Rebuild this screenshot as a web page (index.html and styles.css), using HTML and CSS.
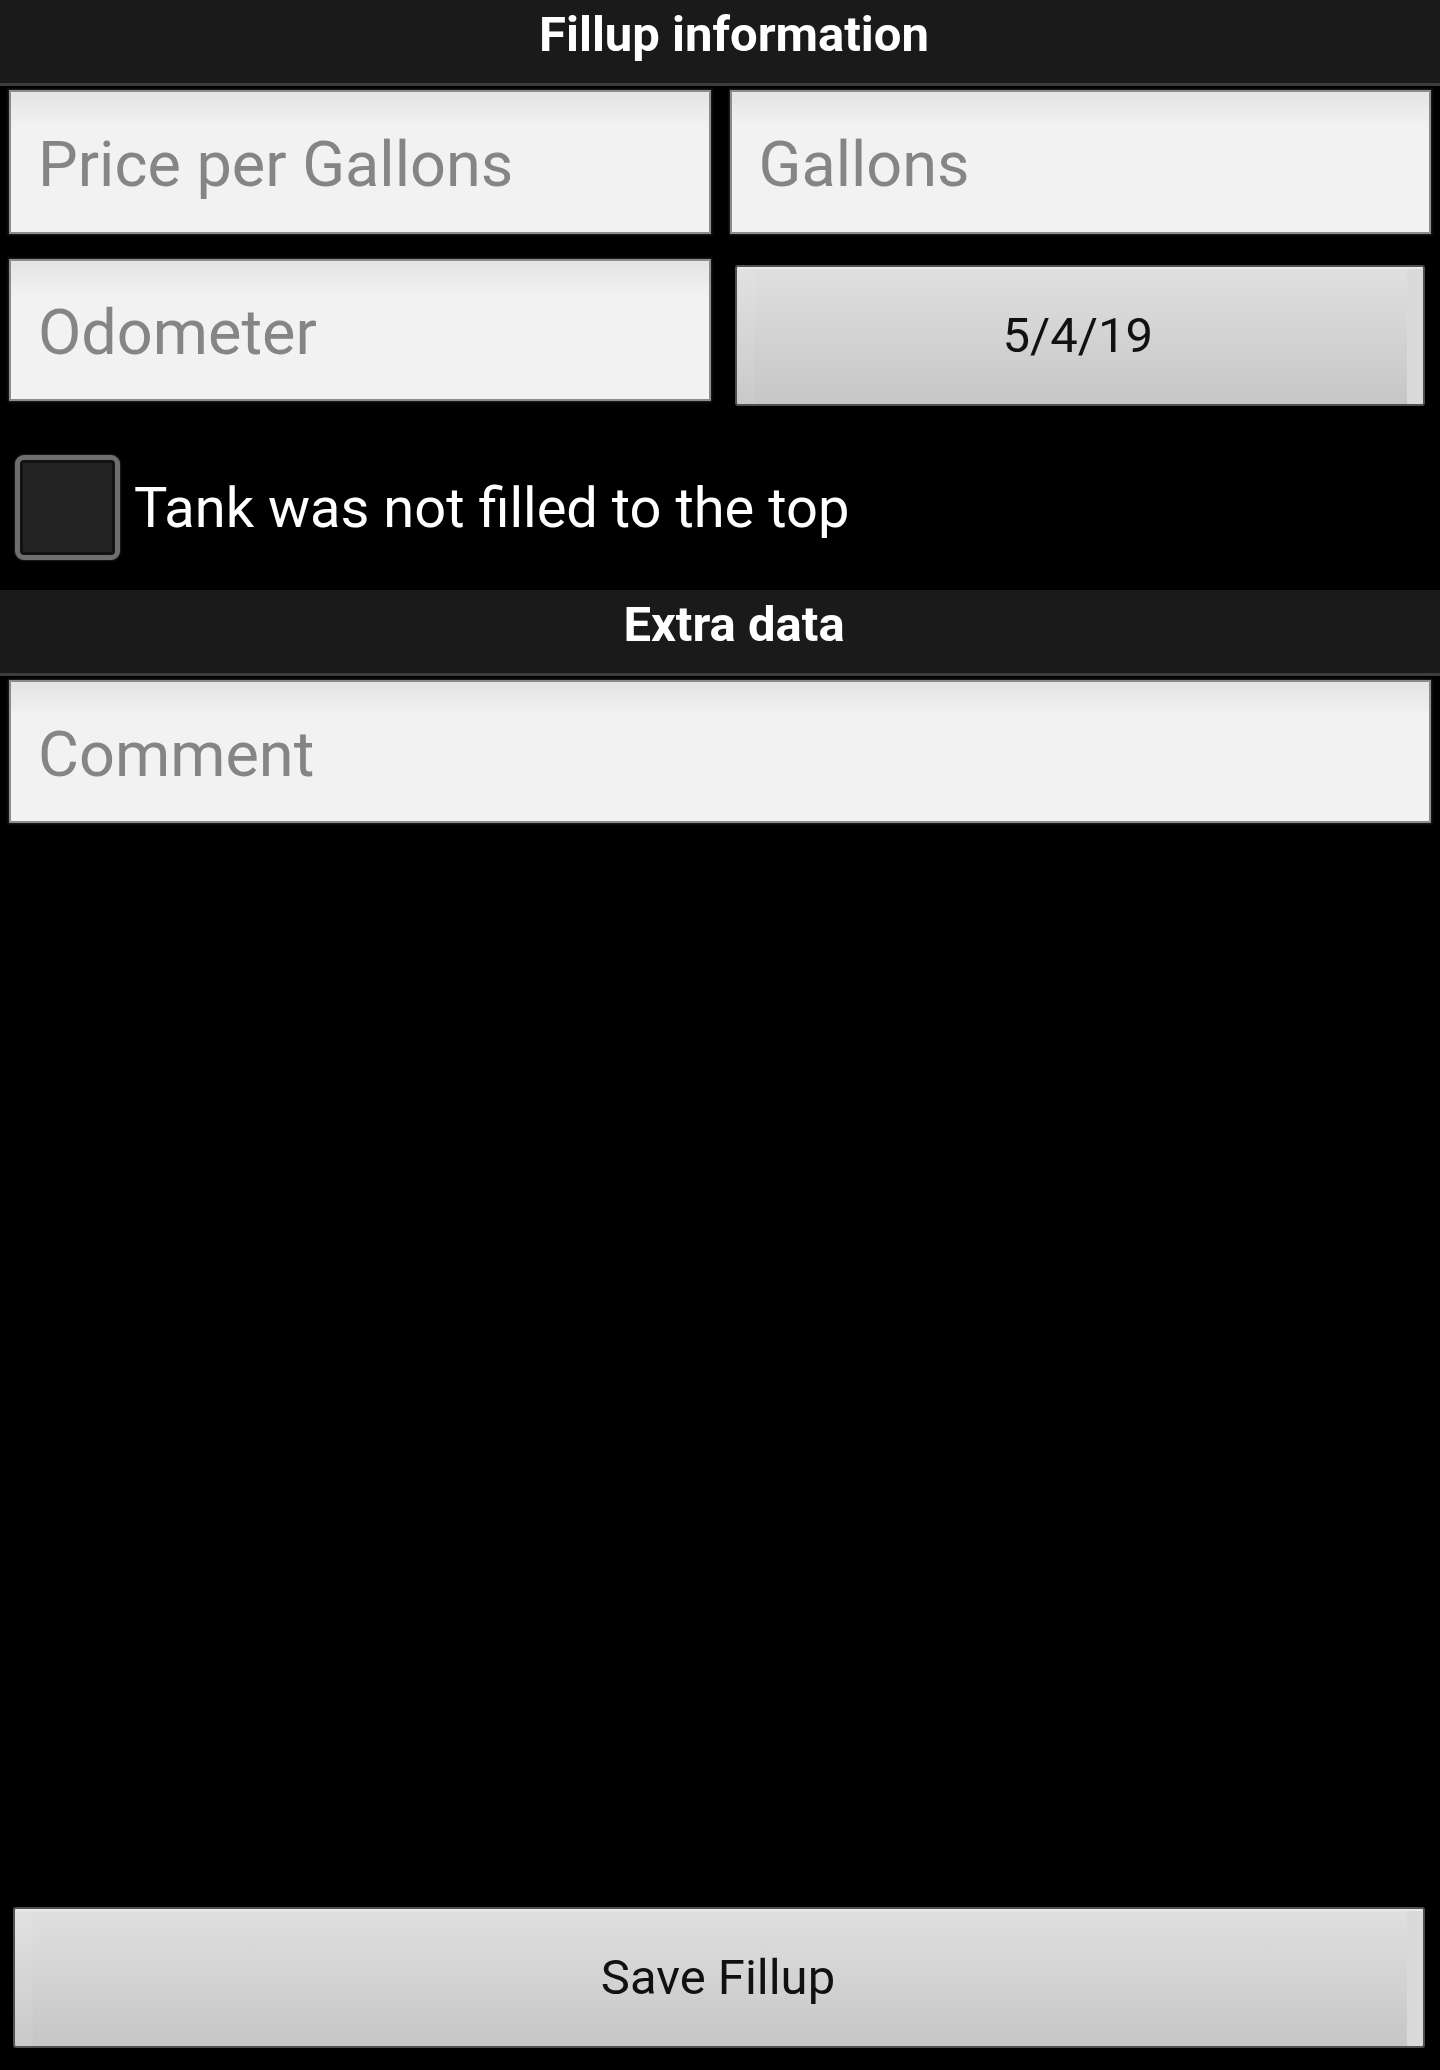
FILE: index.html
```html
<!DOCTYPE html>
<html lang="en">
<head>
<meta charset="utf-8">
<title>Fillup</title>
<link rel="stylesheet" href="styles.css">
</head>
<body>
<div class="screen">
  <div class="section-title">Fillup information</div>
  <div class="field-grid">
    <input class="field" type="text" placeholder="Price per Gallons">
    <input class="field" type="text" placeholder="Gallons">
    <input class="field field-short" type="text" placeholder="Odometer">
    <button class="btn btn-date" type="button">5/4/19</button>
  </div>
  <label class="check-row">
    <span class="checkbox"></span>
    <span class="check-label">Tank was not filled to the top</span>
  </label>
  <div class="section-title">Extra data</div>
  <div class="comment-wrap">
    <input class="field field-comment" type="text" placeholder="Comment">
  </div>
  <div class="footer">
    <button class="btn btn-save" type="button">Save Fillup</button>
  </div>
</div>
</body>
</html>
```

FILE: styles.css
```css
* {
  box-sizing: border-box;
}

html, body {
  margin: 0;
  padding: 0;
  background: #000;
}

body {
  font-family: Roboto, "Noto Sans", "Liberation Sans", sans-serif;
}

.screen {
  width: 1440px;
  height: 2070px;
  display: flex;
  flex-direction: column;
  background: #000;
}

.section-title {
  height: 86px;
  padding: 7px 0 0 28px;
  background: #1a1a1a;
  border-bottom: 3px solid #3d3d3d;
  color: #fff;
  font-weight: 700;
  font-size: 49px;
  line-height: 56px;
  text-align: center;
}

.field-grid {
  display: grid;
  grid-template-columns: 1fr 1fr;
  column-gap: 19px;
  row-gap: 25px;
  padding: 4px 9px 0;
  align-items: start;
}

.field {
  display: block;
  width: 100%;
  height: 144px;
  margin: 0;
  padding: 5px 27px 0;
  border: 2px solid #8c8c8c;
  border-radius: 0;
  background: linear-gradient(#e3e3e3, #f2f2f2 34px, #f2f2f2);
  box-shadow: 0 0 2px 1px rgba(60, 60, 60, 0.6);
  font-family: Roboto, "Noto Sans", sans-serif;
  font-size: 63px;
  color: #222;
  outline: none;
}

.field::placeholder {
  color: #858585;
  opacity: 1;
}

.field-short {
  height: 142px;
}

.field-comment {
  height: 143px;
}

.btn {
  display: block;
  margin: 0;
  padding: 0;
  border: 2px solid #505050;
  border-radius: 3px;
  background:
    linear-gradient(to right, rgba(255,255,255,0.06) 18px, transparent 18px, transparent calc(100% - 16px), #dadada calc(100% - 16px)),
    linear-gradient(#e0e0e0, #c6c6c6);
  box-shadow: inset 0 2px 0 #e9e9e9;
  color: #111;
  font-family: Roboto, "Noto Sans", sans-serif;
  font-size: 49px;
  text-align: center;
  cursor: pointer;
}

.btn-date {
  width: calc(100% - 11px);
  height: 141px;
  margin: 6px 6px 0 5px;
  padding-right: 4px;
}

.check-row {
  display: flex;
  align-items: center;
  gap: 14px;
  margin-top: 49px;
  padding-left: 15px;
  height: 105px;
}

.checkbox {
  flex: none;
  width: 105px;
  height: 105px;
  border: 5px solid #6e6e6e;
  border-radius: 9px;
  background: #232323;
  box-shadow: inset 0 0 0 3px #121212, 0 0 2px #555;
}

.check-label {
  color: #fff;
  font-size: 56px;
  line-height: 64px;
}

.check-row + .section-title {
  margin-top: 30px;
}

.comment-wrap {
  padding: 4px 9px 0;
}

.footer {
  margin-top: auto;
  padding: 0 15px 22px 13px;
}

.btn-save {
  width: 100%;
  height: 141px;
  padding-right: 2px;
}
```
